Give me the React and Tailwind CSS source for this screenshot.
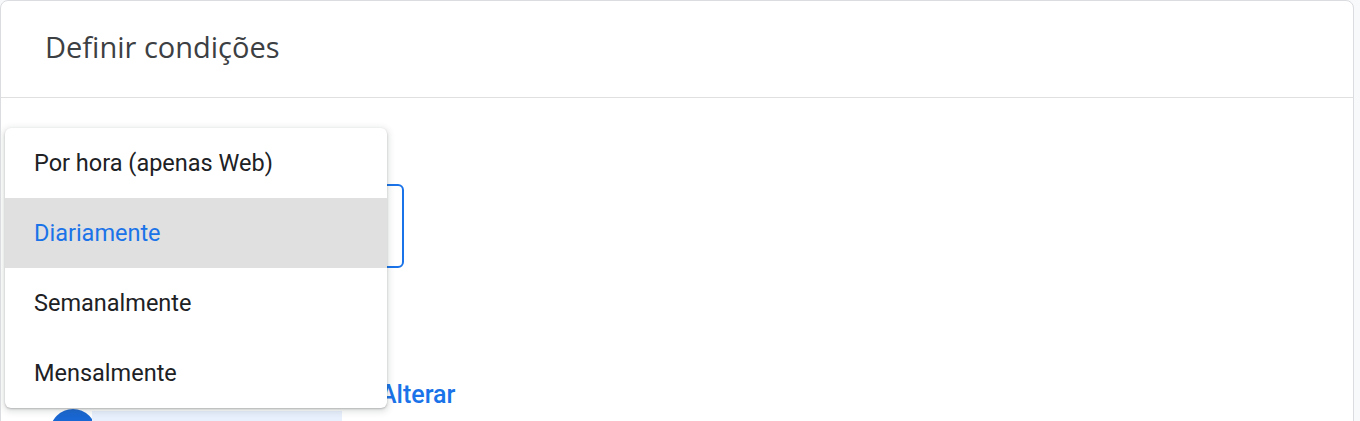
export default function App() {
  const items = ["Por hora (apenas Web)", "Diariamente", "Semanalmente", "Mensalmente"];
  return (
    <div className="w-[1360px] h-[421px] bg-[#f8f9fa] overflow-hidden" style={{ fontFamily: "Roboto, Arial, sans-serif" }}>
      <div className="relative w-[1354px] h-[440px] bg-white border border-[#dadce0] rounded-lg overflow-hidden">
        {/* HEADER */}
        <div className="h-[97px] border-b border-[#e0e0e0] flex items-center pl-[44px]">
          <h1 className="text-[29px] font-medium text-[#3c4043] pb-[5px]" style={{ fontFamily: "'Open Sans', Roboto, sans-serif" }}>
            Definir condições
          </h1>
        </div>

        {/* BODY */}
        <div className="pl-[45px] pt-[86px]">
          <div className="w-[358px] h-[84px] border-2 border-[#1a73e8] rounded-[6px]"></div>
          <div className="mt-[108px] flex items-start">
            <div className="w-[46px] h-[46px] rounded-full bg-[#1967d2] mt-[33px] ml-[4px] shrink-0"></div>
            <div className="w-[250px] h-[30px] bg-[#e8f0fe] mt-[35px] -ml-[4px] shrink-0"></div>
            <span className="ml-[38px] text-[25px] leading-normal font-medium text-[#1a73e8]">Alterar</span>
          </div>
        </div>

        {/* MENU */}
        <div className="absolute left-[4px] top-[127px] w-[382px] bg-white rounded-[6px] shadow-[0_2px_6px_2px_rgba(60,64,67,0.15),0_1px_2px_rgba(60,64,67,0.3)] overflow-hidden">
          {items.map((t, i) => (
            <div
              key={t}
              className={`h-[70px] flex items-center pl-[29px] pt-[2px] text-[23.5px] ${i === 1 ? "bg-[#e0e0e0] text-[#1a73e8]" : "text-[#202124]"}`}
            >
              {t}
            </div>
          ))}
        </div>
      </div>
    </div>
  );
}
